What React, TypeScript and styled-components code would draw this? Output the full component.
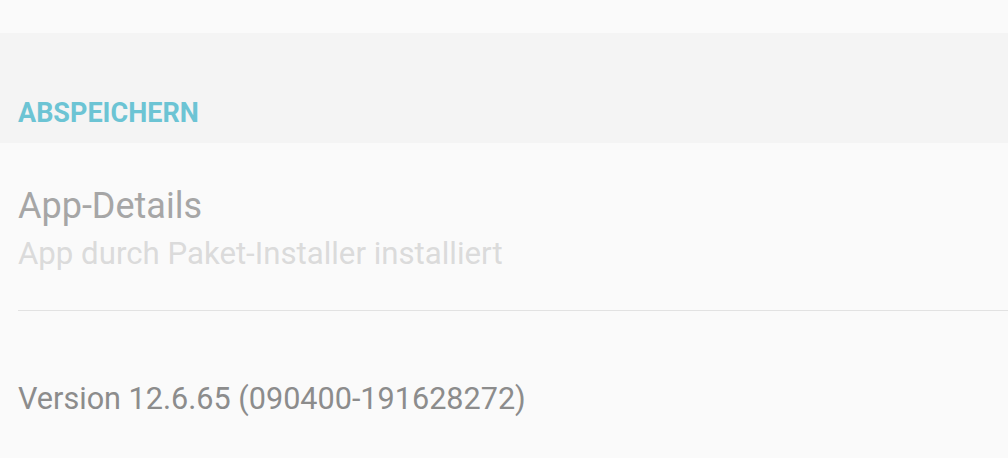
import React from "react";
import styled, { createGlobalStyle } from "styled-components";

const GlobalStyle = createGlobalStyle`
  html, body {
    margin: 0;
    padding: 0;
    background: #fafafa;
    font-family: Roboto, "Noto Sans", sans-serif;
  }
`;

const Page = styled.div`
  width: 1008px;
  height: 458px;
  overflow: hidden;
  background: #fafafa;
  display: flex;
  flex-direction: column;
`;

const TopGap = styled.div`
  height: 33px;
`;

const SectionHeader = styled.div`
  height: 110px;
  background: #f4f4f4;
  display: flex;
  align-items: flex-end;
  padding: 0 18px 16px;
  box-sizing: border-box;
`;

const HeaderText = styled.span`
  color: #6cc4d4;
  font-size: 27px;
  font-weight: 700;
  line-height: 1;
`;

const Item = styled.div`
  margin-left: 18px;
  padding-top: 42px;
  height: 168px;
  box-sizing: border-box;
  border-bottom: 1px solid #e2e2e2;
`;

const ItemTitle = styled.div`
  color: #a6a6a6;
  font-size: 36px;
  line-height: 42px;
`;

const ItemSummary = styled.div`
  color: #dbdbdb;
  font-size: 31.2px;
  line-height: 54px;
`;

const Version = styled.div`
  padding: 68px 18px 0;
  color: #8c8c8c;
  font-size: 30.6px;
  line-height: 40px;
`;

const App: React.FC = () => {
  return (
    <Page>
      <GlobalStyle />
      <TopGap />
      <SectionHeader>
        <HeaderText>ABSPEICHERN</HeaderText>
      </SectionHeader>
      <Item>
        <ItemTitle>App-Details</ItemTitle>
        <ItemSummary>App durch Paket-Installer installiert</ItemSummary>
      </Item>
      <Version>Version 12.6.65 (090400-191628272)</Version>
    </Page>
  );
};

export default App;
